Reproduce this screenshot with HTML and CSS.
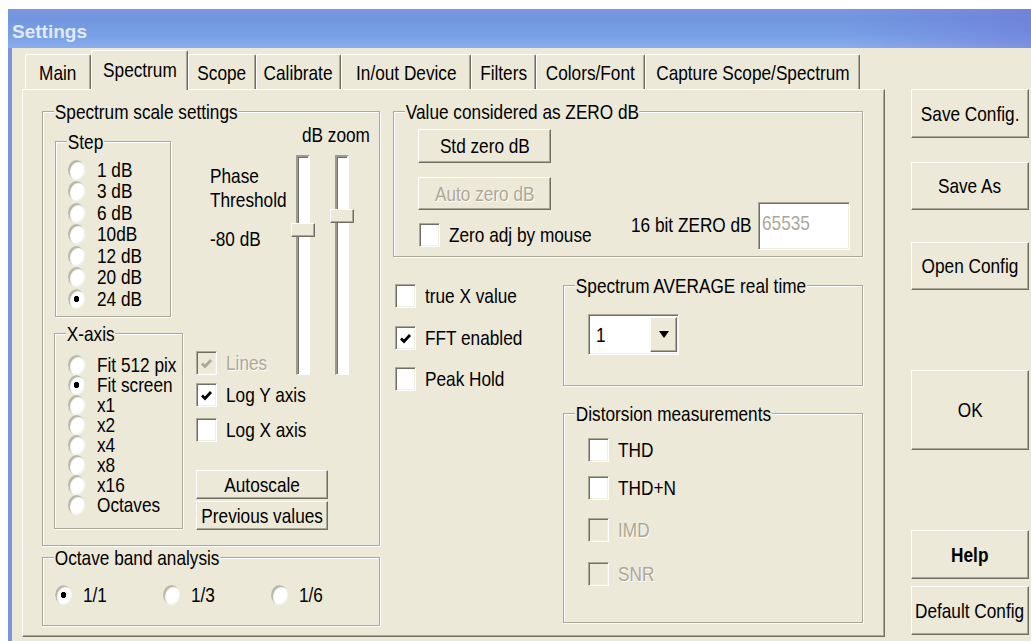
FILE: index.html
```html
<!DOCTYPE html>
<html lang="en">
<head>
<meta charset="utf-8">
<title>Settings</title>
<link rel="stylesheet" href="styles.css">
</head>
<body>
<div class="window">
  <div class="titlebar"><span class="title">Settings</span></div>
  <div class="client">
    <div class="tabarea">
      <div class="tabstrip">
        <div class="tab t-main"><span class="n">Main</span></div>
        <div class="tab tab-sel t-spectrum"><span class="n">Spectrum</span></div>
        <div class="tab t-scope"><span class="n">Scope</span></div>
        <div class="tab t-cal"><span class="n">Calibrate</span></div>
        <div class="tab t-io"><span class="n">In/out Device</span></div>
        <div class="tab t-filters"><span class="n">Filters</span></div>
        <div class="tab t-colors"><span class="n">Colors/Font</span></div>
        <div class="tab t-capture"><span class="n">Capture Scope/Spectrum</span></div>
      </div>
      <div class="panel">
        <div class="lcol">
          <div class="group g-scale">
            <div class="gtitle">Spectrum scale settings</div>
            <div class="scale-body">
              <div class="axis-col">
                <div class="group g-step">
                  <div class="gtitle">Step</div>
                  <div class="radios r-step">
                    <div class="radio"><span class="rb"></span><span class="n">1 dB</span></div>
                    <div class="radio"><span class="rb"></span><span class="n">3 dB</span></div>
                    <div class="radio"><span class="rb"></span><span class="n">6 dB</span></div>
                    <div class="radio"><span class="rb"></span><span class="n">10dB</span></div>
                    <div class="radio"><span class="rb"></span><span class="n">12 dB</span></div>
                    <div class="radio"><span class="rb"></span><span class="n">20 dB</span></div>
                    <div class="radio"><span class="rb on"></span><span class="n">24 dB</span></div>
                  </div>
                </div>
                <div class="group g-axis">
                  <div class="gtitle">X-axis</div>
                  <div class="radios r-axis">
                    <div class="radio"><span class="rb"></span><span class="n">Fit 512 pix</span></div>
                    <div class="radio"><span class="rb on"></span><span class="n">Fit screen</span></div>
                    <div class="radio"><span class="rb"></span><span class="n">x1</span></div>
                    <div class="radio"><span class="rb"></span><span class="n">x2</span></div>
                    <div class="radio"><span class="rb"></span><span class="n">x4</span></div>
                    <div class="radio"><span class="rb"></span><span class="n">x8</span></div>
                    <div class="radio"><span class="rb"></span><span class="n">x16</span></div>
                    <div class="radio"><span class="rb"></span><span class="n">Octaves</span></div>
                  </div>
                </div>
              </div>
              <div class="scale-mid">
                <div class="mid-top">
                  <div class="textcol">
                    <div class="txt t-phase"><span class="n">Phase</span></div>
                    <div class="txt"><span class="n">Threshold</span></div>
                    <div class="txt t-level"><span class="n">-80 dB</span></div>
                    <div class="check dis c-lines">
                      <span class="cb"><svg viewBox="0 0 13 13"><path d="M2 6.5 5 9.5 11 3"/></svg></span><span class="n">Lines</span>
                    </div>
                  </div>
                  <div class="slidercol">
                    <div class="txt t-zoom"><span class="n">dB zoom</span></div>
                    <div class="sliders">
                      <div class="slider"><div class="track"></div><div class="thumb" style="top:68px"></div></div>
                      <div class="slider"><div class="track"></div><div class="thumb" style="top:54px"></div></div>
                    </div>
                  </div>
                </div>
                <div class="check c-logy">
                  <span class="cb"><svg viewBox="0 0 13 13"><path d="M2 6.5 5 9.5 11 3"/></svg></span><span class="n">Log Y axis</span>
                </div>
                <div class="check c-logx"><span class="cb"></span><span class="n">Log X axis</span></div>
                <div class="btn b-auto"><span class="n">Autoscale</span></div>
                <div class="btn b-prev"><span class="n">Previous values</span></div>
              </div>
            </div>
          </div>
          <div class="group g-octave">
            <div class="gtitle">Octave band analysis</div>
            <div class="oct-row">
              <div class="radio oct"><span class="rb on"></span><span class="n">1/1</span></div>
              <div class="radio oct"><span class="rb"></span><span class="n">1/3</span></div>
              <div class="radio oct"><span class="rb"></span><span class="n">1/6</span></div>
            </div>
          </div>
        </div>

        <div class="rcol">
          <div class="group g-zero">
            <div class="gtitle">Value considered as ZERO dB</div>
            <div class="zero-body">
              <div class="zleft">
                <div class="btn b-std"><span class="n">Std zero dB</span></div>
                <div class="btn b-autozero dis"><span class="n">Auto zero dB</span></div>
                <div class="check c-mouse"><span class="cb"></span><span class="n">Zero adj by mouse</span></div>
              </div>
              <div class="zright">
                <div class="txt z-label"><span class="n">16 bit ZERO dB</span></div>
                <div class="field"><span class="n">65535</span></div>
              </div>
            </div>
          </div>
          <div class="lower">
            <div class="checks">
              <div class="check c-truex"><span class="cb"></span><span class="n">true X value</span></div>
              <div class="check c-fft">
                <span class="cb"><svg viewBox="0 0 13 13"><path d="M2 6.5 5 9.5 11 3"/></svg></span><span class="n">FFT enabled</span>
              </div>
              <div class="check c-peak"><span class="cb"></span><span class="n">Peak Hold</span></div>
            </div>
            <div class="groups">
              <div class="group g-avg">
                <div class="gtitle">Spectrum AVERAGE real time</div>
                <div class="combo">
                  <span class="combo-val"><span class="n">1</span></span>
                  <span class="combo-btn"><svg viewBox="0 0 10 7"><path d="M0 0h10L5 7z"/></svg></span>
                </div>
              </div>
              <div class="group g-dist">
                <div class="gtitle">Distorsion measurements</div>
                <div class="dist-list">
                  <div class="check"><span class="cb"></span><span class="n">THD</span></div>
                  <div class="check"><span class="cb"></span><span class="n">THD+N</span></div>
                  <div class="check dis"><span class="cb"></span><span class="n">IMD</span></div>
                  <div class="check dis"><span class="cb"></span><span class="n">SNR</span></div>
                </div>
              </div>
            </div>
          </div>
        </div>
      </div>
    </div>

    <div class="side">
      <div class="btn s-save"><span class="n">Save Config.</span></div>
      <div class="btn s-saveas"><span class="n">Save As</span></div>
      <div class="btn s-open"><span class="n">Open Config</span></div>
      <div class="btn s-ok"><span class="n">OK</span></div>
      <div class="btn s-help"><span class="n">Help</span></div>
      <div class="btn s-default"><span class="n">Default Config</span></div>
    </div>
  </div>
</div>
</body>
</html>
```

FILE: styles.css
```css
* { box-sizing: border-box; }

html, body { margin: 0; padding: 0; background: #fff; }

body {
  font-family: "Liberation Sans", Arial, sans-serif;
  font-size: 21px;
  line-height: 24px;
  color: #000;
}

/* dialog text is set narrow: the face is squeezed horizontally */
.n {
  display: inline-block;
  white-space: nowrap;
  transform: scaleX(.82);
  transform-origin: 0 50%;
}

/* window frame */
.window {
  margin: 9px 0 0 8px;
  width: 1023px;
  height: 632px;
  background: #ece9d8;
  display: flex;
  flex-direction: column;
  overflow: hidden;
}

.titlebar {
  flex: none;
  height: 39px;
  padding: 7px 0 0 4px;
  display: flex;
  align-items: center;
  background:
    linear-gradient(to right, rgba(255,255,255,0) 82%, rgba(104,96,208,.35) 100%),
    linear-gradient(#7a98e1, #7196df 25%, #79a0e6 70%, #8aaded);
}

.title {
  font: bold 19px/24px "Liberation Sans", sans-serif;
  color: #e2eafa;
}

.client {
  flex: 1;
  display: flex;
  border-left: 4px solid #7896e0;
  padding-left: 10px;
}

/* tabs */
.tabarea {
  width: 863px;
  margin-top: 2px;
  display: flex;
  flex-direction: column;
}

.tabstrip {
  height: 39px;
  display: flex;
  align-items: flex-end;
  padding-left: 3px;
}

.tab {
  height: 35px;
  padding-top: 6px;
  display: flex;
  justify-content: center;
  align-items: flex-start;
  border-top: 1px solid #fff;
  border-left: 1px solid #fff;
  border-right: 1px solid #716f64;
  box-shadow: inset -1px 0 #aca899;
  border-radius: 2px 2px 0 0;
}

.tab .n { transform-origin: 50% 50%; }

.tab-sel {
  height: 40px;
  padding-top: 7px;
  margin-bottom: -1px;
  position: relative;
  z-index: 1;
  background: #ece9d8;
}

.t-main { width: 66px; }
.t-spectrum { width: 97px; }
.t-scope { width: 68px; }
.t-cal { width: 85px; }
.t-io { width: 130px; }
.t-filters { width: 65px; }
.t-colors { width: 109px; }
.t-capture { width: 215px; }

.panel {
  height: 548px;
  display: flex;
  padding: 21px 0 0 19px;
  border-top: 1px solid #fff;
  border-left: 1px solid #fff;
  border-right: 1px solid #716f64;
  border-bottom: 1px solid #716f64;
  box-shadow: inset -1px -1px #aca899;
}

/* group boxes */
.group {
  display: flex;
  flex-direction: column;
  border: 1px solid #aca899;
  box-shadow: inset 1px 1px #fff, 1px 1px #fff;
}

.gtitle {
  align-self: flex-start;
  margin: -11px 0 0 11px;
  padding: 0 1px;
  height: 21px;
  line-height: 21px;
  background: #ece9d8;
  white-space: nowrap;
  transform: scaleX(.82);
  transform-origin: 0 50%;
}

.txt { white-space: nowrap; }

/* radio buttons */
.radios { display: flex; flex-direction: column; }

.radio {
  display: flex;
  align-items: center;
  gap: 12px;
  white-space: nowrap;
  line-height: 20px;
}

.rb {
  flex: none;
  width: 17px;
  height: 20px;
  border-radius: 50%;
  background: #fff;
  box-shadow: inset 2px 2px 1px #b9b6a6, inset -1px -1px 1px #f4f2e8;
}

.rb.on {
  background: radial-gradient(ellipse 3px 3.5px at 50% 50%, #000 85%, rgba(0,0,0,0) 100%), #fff;
}

/* check boxes */
.check {
  display: flex;
  align-items: center;
  gap: 9px;
  height: 24px;
  white-space: nowrap;
}

.cb {
  flex: none;
  width: 21px;
  height: 24px;
  display: flex;
  align-items: center;
  justify-content: center;
  background: #fff;
  border: 1px solid;
  border-color: #aca899 #fff #fff #aca899;
  box-shadow: inset 1px 1px #716f64, inset -1px -1px #f1efe2;
}

.cb svg { width: 13px; height: 13px; }
.cb path { fill: none; stroke: #000; stroke-width: 2.8; }

.check.dis { color: #aca899; text-shadow: 1px 1px #fff; }
.check.dis .cb { background: #ece9d8; }
.check.dis .cb path { stroke: #aca899; }

/* push buttons */
.btn {
  display: flex;
  align-items: center;
  justify-content: center;
  white-space: nowrap;
  background: #ece9d8;
  border: 1px solid;
  border-color: #fff #716f64 #716f64 #fff;
  box-shadow: inset -1px -1px #aca899;
}

.btn .n { transform-origin: 50% 50%; }

.btn.dis { color: #aca899; text-shadow: 1px 1px #fff; }

/* left column */
.lcol {
  width: 338px;
  display: flex;
  flex-direction: column;
  gap: 11px;
}

.g-scale { height: 435px; }

.scale-body {
  display: flex;
  padding-left: 11px;
}

.axis-col { width: 130px; display: flex; flex-direction: column; }

.g-step { width: 116px; height: 176px; margin: 19px 0 0 1px; }
.r-step { padding: 7px 0 0 12px; }
.r-step .radio { height: 21.5px; }

.g-axis { width: 129px; height: 196px; margin-top: 16px; }
.r-axis { padding: 11px 0 0 13px; }
.r-axis .radio { height: 20px; }

.scale-mid {
  margin-left: 13px;
  display: flex;
  flex-direction: column;
}

.mid-top { display: flex; }

.textcol { width: 95px; display: flex; flex-direction: column; }
.textcol .txt { padding-left: 14px; }
.t-phase { margin-top: 42px; }
.t-level { margin-top: 15px; }
.c-lines { margin-top: 100px; }

.slidercol { display: flex; flex-direction: column; }
.t-zoom { margin: 1px 0 0 11px; }

.sliders { display: flex; gap: 15px; margin-top: 8px; }

.slider { position: relative; width: 24px; height: 220px; }

.track {
  margin-left: 5px;
  width: 14px;
  height: 220px;
  background: #fff;
  border: solid;
  border-width: 2px 2px 1px 2px;
  border-color: #9d9b8d #fff #fff #9d9b8d;
  box-shadow: inset 1px 1px #716f64;
}

.thumb {
  position: absolute;
  left: 0;
  width: 24px;
  height: 14px;
  background: #ece9d8;
  border: 1px solid;
  border-color: #fff #716f64 #716f64 #fff;
  box-shadow: inset -1px -1px #aca899;
}

.c-logy { margin-top: 8px; }
.c-logx { margin-top: 11px; }

.b-auto, .b-prev { width: 132px; height: 29px; }
.b-auto { margin-top: 28px; }
.b-prev { margin-top: 2px; }

.g-octave { height: 69px; }
.oct-row { display: flex; margin-top: 17px; padding-left: 12px; }
.oct { width: 108px; height: 20px; gap: 11px; }

/* right column */
.rcol {
  width: 470px;
  margin-left: 13px;
  display: flex;
  flex-direction: column;
}

.g-zero { height: 146px; }

.zero-body { display: flex; padding-left: 24px; }

.zleft { width: 190px; display: flex; flex-direction: column; }
.b-std { width: 133px; height: 34px; margin-top: 7px; }
.b-autozero { width: 133px; height: 33px; margin-top: 14px; }
.c-mouse { margin: 13px 0 0 1px; }

.zright { display: flex; align-items: flex-start; margin: 80px 0 0 23px; }
.z-label { width: 121px; margin-top: 11px; }

.field {
  width: 92px;
  height: 48px;
  margin-left: 6px;
  padding: 8px 0 0 3px;
  color: #aca899;
  background: #fff;
  border: 1px solid;
  border-color: #aca899 #fff #fff #aca899;
  box-shadow: inset 1px 1px #716f64, inset -1px -1px #f1efe2;
}

.lower { display: flex; }

.checks { width: 170px; padding-left: 2px; display: flex; flex-direction: column; }
.c-truex { margin-top: 27px; }
.c-fft { margin-top: 18px; }
.c-peak { margin-top: 17px; }

.groups { width: 300px; display: flex; flex-direction: column; }

.g-avg { height: 101px; margin-top: 28px; }

.combo {
  width: 91px;
  height: 41px;
  margin: 18px 0 0 24px;
  display: flex;
  padding: 2px 1px 2px 2px;
  background: #fff;
  border: 1px solid;
  border-color: #aca899 #fff #fff #aca899;
  box-shadow: inset 1px 1px #716f64, inset -1px -1px #f1efe2;
}

.combo-val { flex: 1; padding-left: 5px; display: flex; align-items: center; }

.combo-btn {
  width: 27px;
  display: flex;
  align-items: center;
  justify-content: center;
  background: #ece9d8;
  border: 1px solid;
  border-color: #fff #716f64 #716f64 #fff;
  box-shadow: inset -1px -1px #aca899;
}

.combo-btn svg { width: 10px; height: 7px; }

.g-dist { height: 210px; margin-top: 27px; }

.dist-list { display: flex; flex-direction: column; padding-left: 24px; }
.dist-list .check:nth-child(1) { margin-top: 14px; }
.dist-list .check:nth-child(2) { margin-top: 14px; }
.dist-list .check:nth-child(3) { margin-top: 18px; }
.dist-list .check:nth-child(4) { margin-top: 20px; }

/* command buttons on the right */
.side {
  width: 118px;
  margin-left: 26px;
  display: flex;
  flex-direction: column;
}

.side .btn { width: 118px; }
.s-save { height: 49px; margin-top: 41px; }
.s-saveas { height: 48px; margin-top: 24px; }
.s-open { height: 48px; margin-top: 32px; }
.s-ok { height: 80px; margin-top: 80px; }
.s-help { height: 49px; margin-top: 80px; font-weight: bold; }
.s-default { height: 49px; margin-top: 7px; }
```
